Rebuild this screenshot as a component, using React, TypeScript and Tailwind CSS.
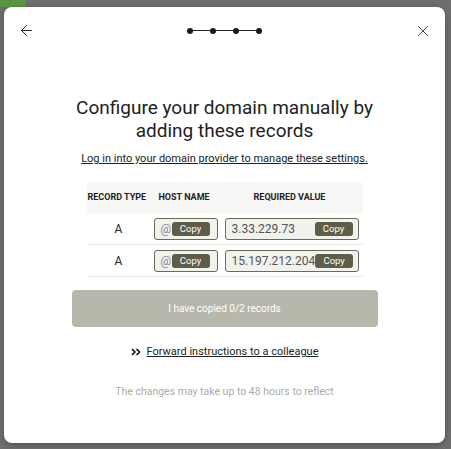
import { ArrowLeft, X } from "lucide-react";

const records = [
  { type: "A", host: "@", value: "3.33.229.73" },
  { type: "A", host: "@", value: "15.197.212.204" },
];

const Stepper = () => (
  <div className="flex items-center">
    {[0, 1, 2, 3].map((i) => (
      <div key={i} className="flex items-center">
        {i > 0 && <div className="w-[17px] h-px bg-[#222]" />}
        <div className="w-[6px] h-[6px] rounded-full bg-[#1a1a1a]" />
      </div>
    ))}
  </div>
);

const CopyButton = () => (
  <span className="flex items-center justify-center shrink-0 w-[38px] h-[14px] rounded-[3px] bg-[#5e5d48] text-white text-[9.5px] leading-none">
    Copy
  </span>
);

const DoubleChevron = () => (
  <svg width="10" height="8" viewBox="0 0 10 8" fill="none" stroke="#111" strokeWidth="1.6">
    <path d="M1 1l3 3-3 3M5.5 1l3 3-3 3" />
  </svg>
);

export default function App() {
  return (
    <div className="w-[451px] h-[449px] bg-[#6e6e6e] overflow-hidden" style={{ fontFamily: "Roboto, 'Liberation Sans', sans-serif" }}>
      <div className="w-[26px] h-[7px] bg-[#5b9440]" />
      <div className="ml-[4px] w-[441px] h-[436px] bg-white rounded-[8px] shadow-[0_2px_6px_rgba(0,0,0,0.25)] flex flex-col">
        {/* Header */}
        <div className="flex items-center justify-between h-[46px] pt-[1px] pl-[14px] pr-[13px]">
          <ArrowLeft className="w-[17px] h-[17px] text-[#222]" strokeWidth={1.4} />
          <Stepper />
          <X className="w-[18px] h-[18px] text-[#333]" strokeWidth={1.2} />
        </div>

        <div className="flex flex-col items-center">
          <h1 className="mt-[43px] text-[19px] leading-[23px] text-[#222] text-center">
            Configure your domain manually by
            <br />
            adding these records
          </h1>
          <a className="mt-[10px] text-[11px] leading-[13px] text-[#222] underline">
            Log in into your domain provider to manage these settings.
          </a>

          {/* Records table */}
          <div className="mt-[17px] w-[276px]">
            <div className="flex items-center h-[32px] bg-[#f7f7f5] rounded-t-[3px] text-[9px] font-bold text-[#222] uppercase">
              <div className="w-[66px] pl-[1px]">Record type</div>
              <div className="w-[70px] pl-[6px]">Host name</div>
              <div className="flex-1 text-center pr-[6px]">Required value</div>
            </div>
            {records.map((r, i) => (
              <div key={i} className={`flex items-center border-b border-[#e8e8e6] ${i === 0 ? "h-[31px] pb-[1px]" : "h-[32px]"}`}>
                <div className="w-[66px] text-center text-[12px] text-[#222] pr-[2px]">{r.type}</div>
                <div className="w-[72px] pl-[1px]">
                  <div className="flex items-center w-[64px] h-[22px] border border-[#6b6a55] rounded-[3px] bg-[#f1f1ee] pl-[6px]">
                    <span className="text-[12px] text-[#8a8a8a] w-[11px]">{r.host}</span>
                    <CopyButton />
                  </div>
                </div>
                <div className="flex items-center justify-between w-[134px] h-[22px] border border-[#6b6a55] rounded-[3px] bg-[#f1f1ee] pl-[6px] pr-[5px]">
                  <span className="text-[12px] text-[#555] whitespace-nowrap">{r.value}</span>
                  <CopyButton />
                </div>
              </div>
            ))}
          </div>

          <button className="mt-[13px] w-[306px] h-[37px] rounded-[4px] bg-[#b8b7ac] text-white text-[10px]">
            I have copied 0/2 records
          </button>

          <div className="mt-[17px] flex items-center gap-[6px] text-[11px] text-[#222]">
            <DoubleChevron />
            <a className="underline">Forward instructions to a colleague</a>
          </div>

          <p className="mt-[23px] text-[10.5px] text-[#acacac]">
            The changes may take up to 48 hours to reflect
          </p>
        </div>
      </div>
    </div>
  );
}
